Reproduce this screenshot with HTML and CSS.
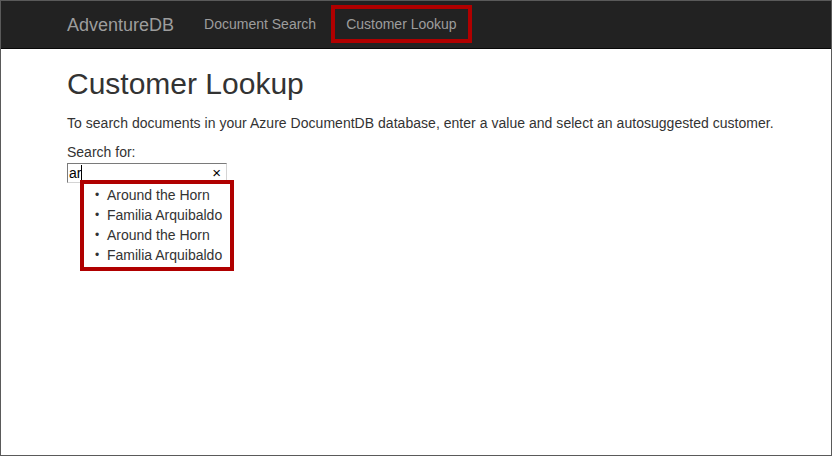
FILE: index.html
```html
<!DOCTYPE html>
<html lang="en">
<head>
<meta charset="utf-8">
<title>Customer Lookup - AdventureDB</title>
<link rel="stylesheet" href="styles.css">
</head>
<body>
<div class="frame">
  <nav class="navbar">
    <a class="brand" href="#">AdventureDB</a>
    <a class="nav-link" href="#">Document Search</a>
    <a class="nav-link active" href="#">Customer Lookup</a>
  </nav>
  <main class="content">
    <h1 class="title">Customer Lookup</h1>
    <p class="intro">To search documents in your Azure DocumentDB database, enter a value and select an autosuggested customer.</p>
    <label class="label">Search for:</label>
    <div class="search">
      <div class="input"><span class="value">ar</span><span class="caret"></span><span class="clear">×</span></div>
      <ul class="suggestions">
        <li>Around the Horn</li>
        <li>Familia Arquibaldo</li>
        <li>Around the Horn</li>
        <li>Familia Arquibaldo</li>
      </ul>
    </div>
  </main>
</div>
</body>
</html>
```
FILE: styles.css
```css
* { box-sizing: border-box; }
html, body { margin: 0; padding: 0; background: #fff; }
body {
  font-family: "Liberation Sans", Arial, sans-serif;
  font-size: 14px;
  line-height: 20px;
  color: #333;
}
.frame {
  width: 832px;
  height: 456px;
  border: 1px solid #5a5a5a;
  overflow: hidden;
}
.navbar {
  height: 48px;
  background: #222;
  border-bottom: 1px solid #080808;
  display: flex;
  align-items: flex-start;
  padding: 4px 0 0 66px;
}
.brand {
  font-size: 18px;
  line-height: 40px;
  color: #9d9d9d;
  text-decoration: none;
  margin-right: 15px;
}
.nav-link {
  font-size: 14px;
  line-height: 38px;
  height: 38px;
  padding: 0 15px;
  color: #9d9d9d;
  text-decoration: none;
}
.nav-link.active {
  box-shadow: inset 0 0 0 4px #b00000;
}
.content {
  padding-left: 66px;
}
.title {
  margin: 18px 0 0;
  font-size: 30px;
  line-height: 33px;
  font-weight: 400;
  color: #333;
}
.intro {
  margin: 13px 0 0;
  letter-spacing: 0.03px;
}
.label {
  display: block;
  margin-top: 9px;
}
.search {
  position: relative;
  width: 160px;
  margin-top: 1px;
}
.input {
  height: 20px;
  width: 160px;
  border: 1px solid;
  border-color: #7a7a7a #d4d4d4 #d4d4d4 #7a7a7a;
  display: flex;
  align-items: center;
  padding-left: 1px;
  color: #000;
  line-height: 18px;
}
.caret {
  display: inline-block;
  width: 1px;
  height: 16px;
  background: #000;
}
.clear {
  margin-left: auto;
  margin-right: 5px;
  font-size: 15px;
  color: #000;
}
.suggestions {
  position: absolute;
  left: 13px;
  top: 17px;
  margin: 0;
  padding: 1px 8px 2px 11px;
  list-style: none;
  background: #fff;
  border: 4px solid #b00000;
  white-space: nowrap;
}
.suggestions li {
  display: flex;
  align-items: center;
  line-height: 20px;
}
.suggestions li::before {
  content: "•";
  font-size: 12px;
  width: 12px;
}
```
